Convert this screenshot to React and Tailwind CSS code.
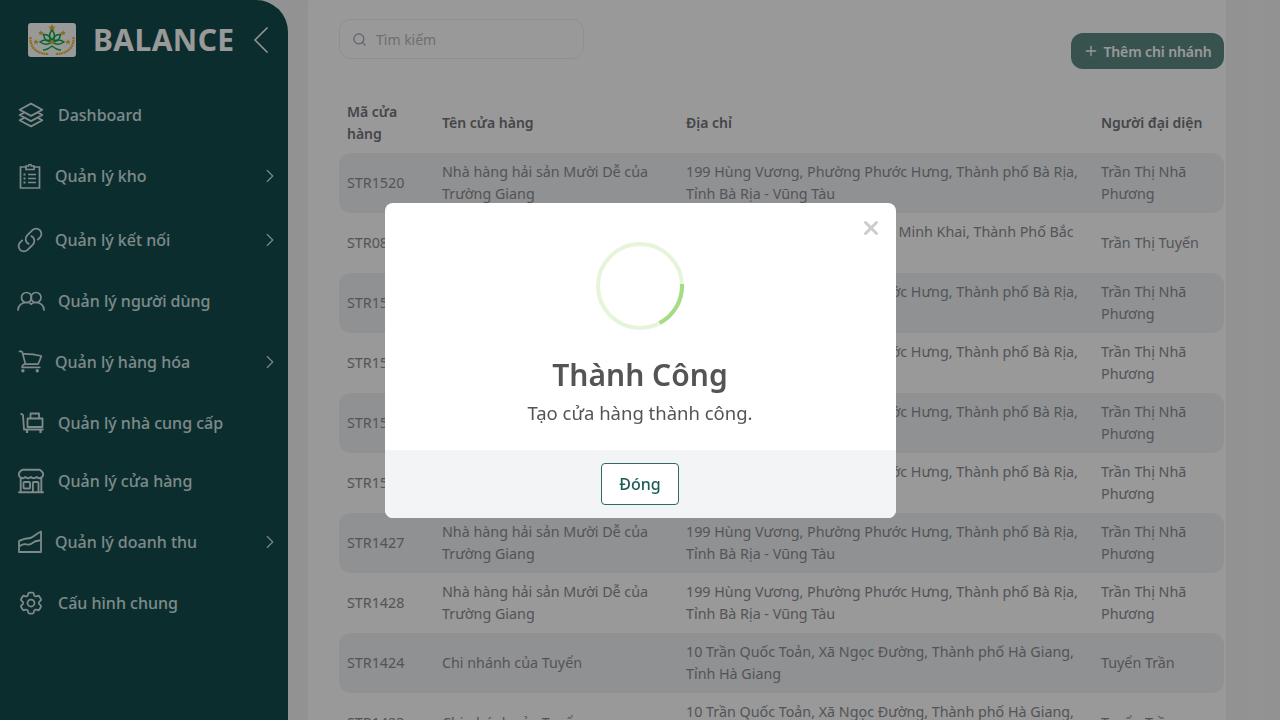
import React from 'react';
import { X, Search, Plus, ChevronRight } from 'lucide-react';
import {
  HiOutlineSquare3Stack3D,
  HiOutlineLink,
  HiOutlineShoppingCart,
  HiOutlineBuildingStorefront,
  HiOutlineCog6Tooth,
} from 'react-icons/hi2';

const ClipboardIcon = ({ className }) => (
  <svg viewBox="0 0 22 26" fill="none" stroke="currentColor" strokeWidth="1.7" className={className}>
    <path d="M7 4H1.500v21h19V4H15" />
    <path d="M7 6.500V3h2.500a1.500 1.500 0 0 1 3 0H15v3.500z" />
    <path d="M9 11.500h8M9 15.500h8M9 19.500h8" />
    <path d="M4.500 11.500h2M4.500 15.500h2M4.500 19.500h2" strokeWidth="2" />
  </svg>
);

const UsersIcon = ({ className }) => (
  <svg viewBox="0 0 28 20" fill="none" stroke="currentColor" strokeWidth="1.7" strokeLinecap="round" className={className}>
    <circle cx="9.500" cy="6.500" r="5" />
    <circle cx="19" cy="6.500" r="5" />
    <path d="M1 19c0-4.200 3.600-7.500 8.500-7.500 2.200 0 4 .6 5 1.600" />
    <path d="M14 13c1.200-1 3-1.500 5-1.500 4.700 0 8 3.300 8 7.500" />
  </svg>
);

const SupplierIcon = ({ className }) => (
  <svg viewBox="0 0 24 22" fill="none" stroke="currentColor" strokeWidth="1.8" strokeLinejoin="round" className={className}>
    <path d="M.5 1.500l2.500 1.500 1 14.500h19.500" />
    <rect x="7.500" y="6.500" width="15" height="8.500" />
    <path d="M10.500 6.500V1.500h8.500v5" />
    <path d="M7 17.500v3.500M20.500 17.500v3.500" strokeWidth="2.200" />
  </svg>
);

const RevenueIcon = ({ className }) => (
  <svg viewBox="0 0 24 23" fill="none" stroke="currentColor" strokeWidth="1.800" strokeLinejoin="round" className={className}>
    <path d="M1 11c3-1 5-2.500 8-2.500s4.500-.5 7-2.500 5-3.500 7-4.500V22H1z" />
    <path d="M1 16.500c3-2 5-3 8-2s5-1 7-2.500 5-1 7-2" />
  </svg>
);

const SidebarArrow = () => (
  <svg viewBox="0 0 14 26" fill="none" stroke="currentColor" strokeWidth="1.500" className="ml-[19px] w-[14px] h-[26px] text-white">
    <path d="M13.500 .5L1 13l12.500 12.500" />
  </svg>
);

const Logo = () => (
  <svg viewBox="0 0 48 34" className="w-12 h-[34px] shrink-0">
    <rect width="48" height="34" rx="3" fill="#ffffff" />
    <g fill="none" stroke="#e8b52c" strokeWidth="2.200" strokeDasharray="2 .6">
      <path d="M2.500 14c-1 10 6 17 18 17" />
      <path d="M45.500 14c1 10-6 17-18 17" />
    </g>
    <g fill="#e8b52c">
      <path d="M24 1l1.200 2.500 2.600.2-2 1.700.7 2.600-2.500-1.400-2.500 1.400.7-2.600-2-1.700 2.600-.2z" />
      <path d="M13 7l.8 1.900 2 .2-1.500 1.300.5 2-1.800-1.100-1.800 1.100.5-2-1.500-1.300 2-.2z" />
      <path d="M35 7l.8 1.900 2 .2-1.500 1.300.5 2-1.800-1.100-1.800 1.100.5-2-1.500-1.300 2-.2z" />
      <path d="M8 16l.8 1.900 2 .2-1.500 1.300.5 2-1.800-1.100-1.800 1.100.5-2-1.500-1.300 2-.2z" />
      <path d="M40 16l.8 1.900 2 .2-1.500 1.300.5 2-1.800-1.100-1.800 1.100.5-2-1.500-1.300 2-.2z" />
    </g>
    <g fill="none" stroke="#12a84c" strokeWidth="1.500">
      <path d="M24 19c-3.500-3-3.500-8 0-12 3.500 4 3.500 9 0 12z" />
      <path d="M24 19c-5 0-8-3-8.500-7.500 4.500-.5 8 2.500 8.500 7.500z" />
      <path d="M24 19c5 0 8-3 8.500-7.500-4.500-.5-8 2.500-8.500 7.500z" />
      <path d="M24 19c-3 3-8 3-12 0 3-2.500 9-3 12 0z" />
      <path d="M24 19c3 3 8 3 12 0-3-2.500-9-3-12 0z" />
      <path d="M15 27c3 0 6-1.500 9-4 3 2.500 6 4 9 4" />
    </g>
    <circle cx="24" cy="19" r="2" fill="#e8b52c" />
  </svg>
);

const navItems = [
  { label: 'Dashboard', Icon: HiOutlineSquare3Stack3D, icon: 'w-[28px] h-[28px] ml-[17px] mr-[13px]', row: '' },
  { label: 'Quản lý kho', Icon: ClipboardIcon, icon: 'w-[22px] h-[26px] ml-[19px] mr-[14px]', row: '', arrow: true },
  { label: 'Quản lý kết nối', Icon: HiOutlineLink, icon: 'w-[28px] h-[28px] ml-[16px] mr-[11px]', row: 'mt-[3px]', arrow: true },
  { label: 'Quản lý người dùng', Icon: UsersIcon, icon: 'w-[28px] h-[20px] ml-[17px] mr-[13px]', row: '' },
  { label: 'Quản lý hàng hóa', Icon: HiOutlineShoppingCart, icon: 'w-[27px] h-[27px] ml-[17px] mr-[11px]', row: '', arrow: true },
  { label: 'Quản lý nhà cung cấp', Icon: SupplierIcon, icon: 'w-[24px] h-[22px] ml-[20px] mr-[14px]', row: '' },
  { label: 'Quản lý cửa hàng', Icon: HiOutlineBuildingStorefront, icon: 'w-[30px] h-[30px] ml-[16px] mr-[12px]', row: '-mt-[3px]' },
  { label: 'Quản lý doanh thu', Icon: RevenueIcon, icon: 'w-[24px] h-[23px] ml-[18px] mr-[13px]', row: '', arrow: true },
  { label: 'Cấu hình chung', Icon: HiOutlineCog6Tooth, icon: 'w-[28px] h-[28px] ml-[17px] mr-[13px]', row: '' },
];

const seafood = 'Nhà hàng hải sản Mười Dễ của Trường Giang';
const baria = '199 Hùng Vương, Phường Phước Hưng, Thành phố Bà Rịa, Tỉnh Bà Rịa - Vũng Tàu';
const hagiang = '10 Trần Quốc Toản, Xã Ngọc Đường, Thành phố Hà Giang, Tỉnh Hà Giang';
const phuong = 'Trần Thị Nhã Phương';

const rows = [
  ['STR1520', seafood, baria, phuong],
  ['STR0801', 'Chi nhánh Bắc Ninh', 'Số nhà 125, Đường Nguyễn Thị Minh Khai, Thành Phố Bắc Ninh, Tỉnh Bắc Ninh', 'Trần Thị Tuyến'],
  ['STR1519', seafood, baria, phuong],
  ['STR1518', seafood, baria, phuong],
  ['STR1517', seafood, baria, phuong],
  ['STR1516', seafood, baria, phuong],
  ['STR1427', seafood, baria, phuong],
  ['STR1428', seafood, baria, phuong],
  ['STR1424', 'Chi nhánh của Tuyển', hagiang, 'Tuyển Trần'],
  ['STR1423', 'Chi nhánh của Tuyển', hagiang, 'Tuyển Trần'],
];

const Sidebar = () => (
  <aside className="w-[288px] shrink-0 h-screen bg-[#134c4c] rounded-tr-[32px] text-[#d4e4e4]">
    <div className="h-[84px] flex items-center pl-[28px] pb-[4px]">
      <Logo />
      <span className="ml-[17px] text-[30px] tracking-[0.4px] font-bold text-white leading-none">BALANCE</span>
      <SidebarArrow />
    </div>
    <nav>
      {navItems.map(({ label, Icon, icon, row, arrow }) => (
        <div key={label} className={`h-[61px] flex items-center text-[16px] font-medium ${row}`}>
          <Icon className={`shrink-0 ${icon}`} />
          <span>{label}</span>
          {arrow && <ChevronRight className="ml-auto mr-[7px] w-[22px] h-[22px]" strokeWidth={1.2} />}
        </div>
      ))}
    </nav>
  </aside>
);

const StoreTable = () => (
  <table className="w-full table-fixed mt-[24px] text-[14.3px] leading-[22px] text-[#8a8d92] border-collapse">
    <thead>
      <tr className="h-[60px] text-left text-[14px] text-[#72757a]">
        <th className="w-[95px] px-2 font-semibold">Mã cửa hàng</th>
        <th className="w-[244px] px-2 font-semibold">Tên cửa hàng</th>
        <th className="w-[415px] px-2 font-semibold">Địa chỉ</th>
        <th className="px-2 font-semibold">Người đại diện</th>
      </tr>
    </thead>
    <tbody>
      {rows.map((row, i) => (
        <tr key={row[0]} className={`h-[60px] ${i % 2 === 0 ? 'bg-[#f1f2f4]' : ''}`}>
          <td className="px-2 rounded-l-xl">{row[0]}</td>
          <td className="px-2">{row[1]}</td>
          <td className="px-2">{row[2]}</td>
          <td className="px-2 rounded-r-xl">{row[3]}</td>
        </tr>
      ))}
    </tbody>
  </table>
);

const SuccessModal = () => (
  <div className="fixed inset-0 bg-black/40 flex items-center justify-center">
    <div className="relative w-[511px] h-[315px] bg-white rounded-lg overflow-hidden flex flex-col items-center">
      <X className="absolute top-[14px] right-[14px] w-[22px] h-[22px] text-[#cccccc]" strokeWidth={3.2} />
      <svg viewBox="0 0 88 88" fill="none" strokeWidth="4" className="w-[88px] h-[88px] mt-[39px]">
        <circle cx="44" cy="44" r="42" stroke="#e4f5da" />
        <path d="M86 42A42 42 0 0 1 63.700 81" stroke="#a5dc86" />
      </svg>
      <h2 className="mt-[27px] text-[30px] leading-[36px] font-semibold text-[#545454]">Thành Công</h2>
      <p className="mt-[6px] text-[18.5px] leading-[28px] text-[#545454]">Tạo cửa hàng thành công.</p>
      <div className="mt-auto w-full h-[68px] bg-[#f3f4f6] flex items-center justify-center">
        <button type="button" className="w-[78px] h-[42px] bg-white border border-[#2d6a64] rounded-[4px] text-[#1d5c56] font-medium">
          Đóng
        </button>
      </div>
    </div>
  </div>
);

export default function App() {
  return (
    <div className="h-screen flex overflow-hidden bg-[#f3f4f6] font-['Noto_Sans',sans-serif]">
      <Sidebar />
      <main className="flex-1 min-w-0 flex pl-[20px]">
        <section className="w-[918px] shrink-0 -mt-[12px] h-fit bg-white rounded-2xl pt-[31px] pl-[31px] pr-[2px]">
          <div className="flex items-start justify-between">
            <div className="w-[245px] h-[40px] flex items-center gap-[9px] px-[12px] border border-[#eeeeee] rounded-xl">
              <Search className="w-[15px] h-[15px] text-[#9ca3af]" />
              <span className="text-[14px] text-[#b4b8be]">Tìm kiếm</span>
            </div>
            <button type="button" className="mt-[14px] w-[153px] h-[36px] flex items-center justify-center gap-1 rounded-xl bg-[#5e8985] text-[14px] tracking-[-0.1px] font-semibold text-white">
              <Plus className="w-[16px] h-[16px]" />
              Thêm chi nhánh
            </button>
          </div>
          <StoreTable />
        </section>
        <div className="w-[20px] shrink-0" />
        <div className="w-[18px] shrink-0 bg-[#f5f5f5]" />
      </main>
      <SuccessModal />
    </div>
  );
}
